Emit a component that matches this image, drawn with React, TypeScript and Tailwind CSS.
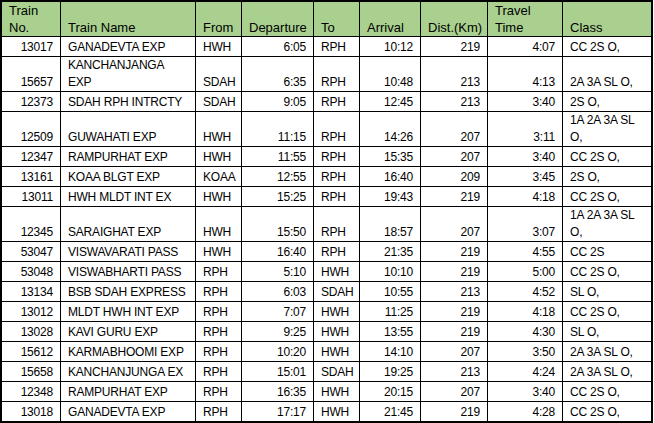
// Train timetable sheet (HWH / SDAH <-> RPH)
const headers: { label: string[]; w: string }[] = [
  { label: ['Train', 'No.'], w: 'w-[59px]' },
  { label: ['Train Name'], w: 'w-[135px]' },
  { label: ['From'], w: 'w-[46px]' },
  { label: ['Departure'], w: 'w-[72px]' },
  { label: ['To'], w: 'w-[46px]' },
  { label: ['Arrival'], w: 'w-[61px]' },
  { label: ['Dist.(Km)'], w: 'w-[67px]' },
  { label: ['Travel', 'Time'], w: 'w-[75px]' },
  { label: ['Class'], w: 'w-[88px]' },
];

// a "|" in a cell means the text wraps onto a second line (double-height row)
const rows: string[][] = [
  ['13017', 'GANADEVTA EXP', 'HWH', '6:05', 'RPH', '10:12', '219', '4:07', 'CC 2S O,'],
  ['15657', 'KANCHANJANGA|EXP', 'SDAH', '6:35', 'RPH', '10:48', '213', '4:13', '2A 3A SL O,'],
  ['12373', 'SDAH RPH INTRCTY', 'SDAH', '9:05', 'RPH', '12:45', '213', '3:40', '2S O,'],
  ['12509', 'GUWAHATI EXP', 'HWH', '11:15', 'RPH', '14:26', '207', '3:11', '1A 2A 3A SL|O,'],
  ['12347', 'RAMPURHAT EXP', 'HWH', '11:55', 'RPH', '15:35', '207', '3:40', 'CC 2S O,'],
  ['13161', 'KOAA BLGT EXP', 'KOAA', '12:55', 'RPH', '16:40', '209', '3:45', '2S O,'],
  ['13011', 'HWH MLDT INT EX', 'HWH', '15:25', 'RPH', '19:43', '219', '4:18', 'CC 2S O,'],
  ['12345', 'SARAIGHAT EXP', 'HWH', '15:50', 'RPH', '18:57', '207', '3:07', '1A 2A 3A SL|O,'],
  ['53047', 'VISWAVARATI PASS', 'HWH', '16:40', 'RPH', '21:35', '219', '4:55', 'CC 2S'],
  ['53048', 'VISWABHARTI PASS', 'RPH', '5:10', 'HWH', '10:10', '219', '5:00', 'CC 2S O,'],
  ['13134', 'BSB SDAH EXPRESS', 'RPH', '6:03', 'SDAH', '10:55', '213', '4:52', 'SL O,'],
  ['13012', 'MLDT HWH INT EXP', 'RPH', '7:07', 'HWH', '11:25', '219', '4:18', 'CC 2S O,'],
  ['13028', 'KAVI GURU EXP', 'RPH', '9:25', 'HWH', '13:55', '219', '4:30', 'SL O,'],
  ['15612', 'KARMABHOOMI EXP', 'RPH', '10:20', 'HWH', '14:10', '207', '3:50', '2A 3A SL O,'],
  ['15658', 'KANCHANJUNGA EX', 'RPH', '15:01', 'SDAH', '19:25', '213', '4:24', '2A 3A SL O,'],
  ['12348', 'RAMPURHAT EXP', 'RPH', '16:35', 'HWH', '20:15', '207', '3:40', 'CC 2S O,'],
  ['13018', 'GANADEVTA EXP', 'RPH', '17:17', 'HWH', '21:45', '219', '4:28', 'CC 2S O,'],
];

const rightAligned = [0, 3, 5, 6, 7];

export default function App() {
  return (
    <div className="min-h-screen bg-white font-['Liberation_Sans',Arial,sans-serif] text-black">
      <table className="w-[653px] table-fixed border-separate border-spacing-0 border-2 border-black">
        <thead>
          <tr>
            {headers.map((h, i) => (
              <th
                key={i}
                className={`${h.w} h-[34px] whitespace-nowrap border-b border-black bg-[#a9d08e] px-[7px] text-left align-bottom text-[13px] font-normal leading-[17px] ${
                  i < headers.length - 1 ? 'border-r' : ''
                }`}
              >
                {h.label.map((l, j) => (
                  <div key={j}>{l}</div>
                ))}
              </th>
            ))}
          </tr>
        </thead>
        <tbody>
          {rows.map((r, ri) => {
            const tall = r.some((c) => c.includes('|'));
            const last = ri === rows.length - 1;
            return (
              <tr key={ri}>
                {r.map((c, ci) => (
                  <td
                    key={ci}
                    className={`${tall ? 'h-[35px]' : last ? 'h-[19px]' : 'h-[20px]'} whitespace-nowrap px-[7px] align-bottom text-[12px] leading-[17px] tracking-[-0.2px] border-black ${
                      rightAligned.includes(ci) ? 'text-right' : 'text-left'
                    } ${ci < r.length - 1 ? 'border-r' : ''} ${last ? '' : 'border-b'}`}
                  >
                    {c.split('|').map((l, j) => (
                      <div key={j}>{l}</div>
                    ))}
                  </td>
                ))}
              </tr>
            );
          })}
        </tbody>
      </table>
    </div>
  );
}
